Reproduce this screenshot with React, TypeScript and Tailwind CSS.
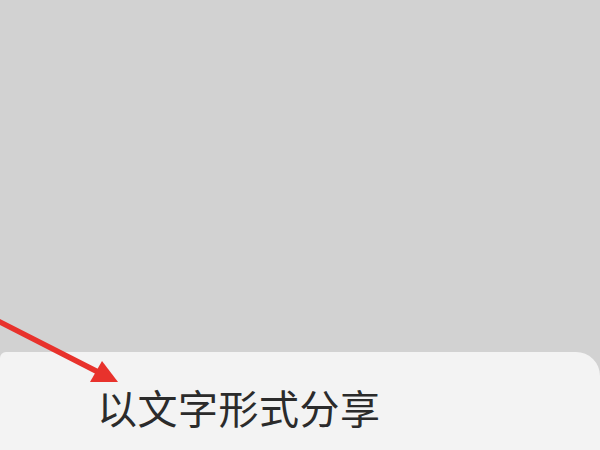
export default function App() {
  return (
    <div className="relative w-[600px] h-[450px] overflow-hidden bg-[#d2d2d2] flex flex-col">
      <div className="flex-1" />
      <div className="h-[98px] bg-[#f3f3f3] rounded-tr-[24px] rounded-tl-[6px] pl-[97px] pt-[35px]">
        <div
          className="text-[40px] leading-[40px] text-[#2b2b2b] tracking-[0.5px]"
          style={{ fontFamily: '"Noto Sans CJK SC", "Noto Sans", sans-serif' }}
        >
          以文字形式分享
        </div>
      </div>
      {/* red annotation arrow */}
      <svg className="absolute left-0 top-0" width="600" height="450" viewBox="0 0 600 450">
        <line x1="-4" y1="320" x2="100" y2="373" stroke="#e8322c" strokeWidth="5.5" strokeLinecap="round" />
        <polygon points="118,382 90,382 102,361" fill="#e8322c" />
      </svg>
    </div>
  );
}
